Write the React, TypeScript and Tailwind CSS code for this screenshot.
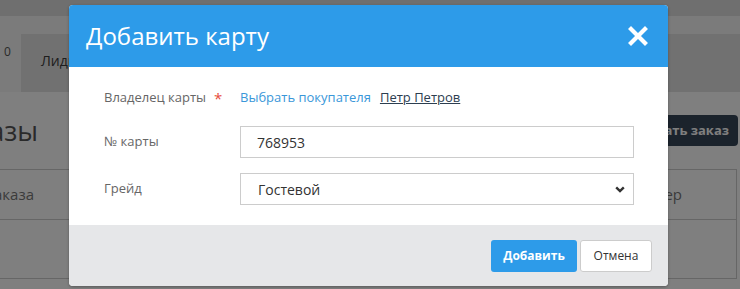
import React from 'react';

const Backdrop: React.FC = () => (
  <div className="w-[740px] h-[289px] bg-white">
    <div className="h-[16px] bg-[#dedede]" />
    <div className="h-[18px] bg-[#f6f6f6]" />
    <div className="h-[58px] bg-[#e2e2e2] flex items-start">
      <div className="w-[21px] h-[58px] bg-[#f6f6f6] pl-[4px] pt-[9px] text-[12px] leading-[18px] text-[#555]">0</div>
      <div className="pl-[20px] pt-[16px] text-[14px] text-[#3c3c3c]">Лиды</div>
    </div>
    <div className="h-[77px] flex items-center justify-between">
      <div className="w-[38px] flex justify-end whitespace-nowrap text-[27px] leading-none text-[#555]">Заказы</div>
      <button className="mr-[2px] h-[31px] pl-[40px] pr-[9px] rounded-[4px] bg-[#364659] text-white text-[13px] font-bold">
        Создать заказ
      </button>
    </div>
    <div className="w-[737px] border-r border-[#cccccc]">
      <div className="h-[51px] flex items-center border-t border-b border-[#cccccc] text-[15px] text-[#777]">
        <div className="w-[34px] flex justify-end whitespace-nowrap">№ заказа</div>
        <div className="flex-1" />
        <div className="w-[137px]">
          <div className="w-[83px] flex justify-end whitespace-nowrap">Менеджер</div>
        </div>
      </div>
      <div className="h-[59px] border-b border-[#cccccc]" />
    </div>
  </div>
);

const AddCardModal: React.FC = () => (
  <div className="absolute left-[69px] top-[5px] w-[599px] h-[281px] rounded-[4px] overflow-hidden bg-white shadow-[0_1px_3px_rgba(0,0,0,0.3)] flex flex-col">
    <div className="h-[62px] bg-[#2d9be9] flex items-center justify-between pl-[17px] pr-[20px]">
      <h2 className="text-[24px] text-white leading-none">Добавить карту</h2>
      <svg width="20" height="20" viewBox="0 0 20 20">
        <path d="M3 3 L17 17 M17 3 L3 17" stroke="white" strokeWidth="4.2" strokeLinecap="square" />
      </svg>
    </div>

    <div className="flex-1 pl-[35px] pr-[34px] pt-[20px] text-[13px]">
      <div className="grid grid-cols-[136px_1fr] items-center h-[22px]">
        <div className="text-[#666] flex items-center">
          Владелец карты
          <span className="ml-[8px] text-[15px] text-[#e74c3c] leading-none">*</span>
        </div>
        <div className="flex items-center">
          <a className="text-[#3a97d9] cursor-pointer">Выбрать покупателя</a>
          <a className="ml-[9px] text-[#2c3e50] underline cursor-pointer">Петр Петров</a>
        </div>
      </div>

      <div className="grid grid-cols-[136px_1fr] items-center mt-[17px]">
        <div className="text-[#666]">№ карты</div>
        <input
          readOnly
          value="768953"
          className="h-[32px] border border-[#cccccc] px-[16px] text-[14px] text-[#333] outline-none"
        />
      </div>

      <div className="grid grid-cols-[136px_1fr] items-center mt-[15px]">
        <div className="text-[#666]">Грейд</div>
        <div className="h-[32px] border border-[#cccccc] pl-[17px] pr-[8px] flex items-center justify-between text-[14px] text-[#333]">
          <span>Гостевой</span>
          <svg width="10" height="7" viewBox="0 0 10 7">
            <path d="M1.2 1.3 L5 5 L8.8 1.3" fill="none" stroke="#333" strokeWidth="2.4" />
          </svg>
        </div>
      </div>
    </div>

    <div className="h-[61px] bg-[#e6e7e9] flex items-center justify-end gap-[3px] pr-[16px]">
      <button className="w-[86px] h-[32px] rounded-[3px] bg-[#2d9be9] text-white text-[12px] font-bold">
        Добавить
      </button>
      <button className="w-[72px] h-[32px] rounded-[3px] bg-white border border-[#cccccc] text-[#333] text-[12px]">
        Отмена
      </button>
    </div>
  </div>
);

const App: React.FC = () => {
  return (
    <div className="relative w-[740px] h-[289px] overflow-hidden font-['Open_Sans',sans-serif]">
      <Backdrop />
      <div className="absolute inset-0 bg-black/50" />
      <AddCardModal />
    </div>
  );
};

export default App;
